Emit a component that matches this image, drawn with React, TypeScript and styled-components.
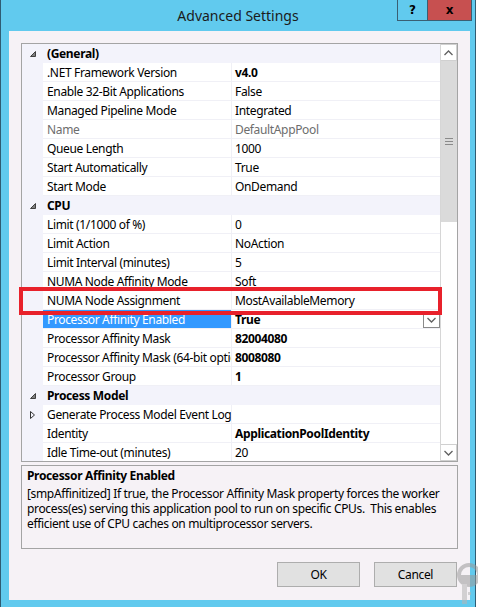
import React from 'react';
import styled, { createGlobalStyle } from 'styled-components';

const Global = createGlobalStyle`
  html, body { margin: 0; padding: 0; background: #ffffff; }
  body { font-family: "Noto Sans", "Segoe UI", sans-serif; font-size: 12px; letter-spacing: -0.35px; color: #000; }
  #root { width: 478px; height: 607px; overflow: hidden; }
`;

const Window = styled.div`
  position: relative;
  width: 476px;
  height: 607px;
  box-sizing: border-box;
  background: #61caee;
  border-left: 1px solid #2f5c73;
  border-right: 1px solid #2f5c73;
  display: flex;
  flex-direction: column;
`;

const TitleBar = styled.div`
  height: 31px;
  display: grid;
  grid-template-columns: 1fr auto 1fr;
  align-items: start;
`;

const Title = styled.div`
  grid-column: 2;
  font-size: 14px;
  letter-spacing: 0;
  line-height: 31px;
  color: #1b1b1b;
  white-space: nowrap;
`;

const Captions = styled.div`
  grid-column: 3;
  justify-self: end;
  display: flex;
  margin-right: 3px;
`;

const CaptionButton = styled.div<{ $close?: boolean }>`
  height: 21px;
  box-sizing: border-box;
  width: ${p => (p.$close ? '45px' : '30px')};
  background: ${p => (p.$close ? '#c75050' : 'transparent')};
  border: 1px solid #3a5f73;
  border-top: none;
  border-right: ${p => (p.$close ? '1px solid #3a5f73' : 'none')};
  display: flex;
  align-items: center;
  justify-content: center;
  font-family: "DejaVu Sans", sans-serif;
  font-weight: bold;
  font-size: 12px;
  letter-spacing: 0;
  color: #000;
`;

const Client = styled.div`
  flex: 1;
  margin: 0 5px 7px 8px;
  background: #f6f2f6;
  padding: 12px 12px 0 12px;
  display: flex;
  flex-direction: column;
`;

const Grid = styled.div`
  position: relative;
  height: 419px;
  box-sizing: border-box;
  border: 1px solid #a4a4a4;
  display: flex;
  background: #fff;
`;

const Rows = styled.div`
  flex: 1;
  overflow: hidden;
`;

const Row = styled.div<{ $cat?: boolean }>`
  display: grid;
  grid-template-columns: 21px 189px 1fr;
  height: 19px;
  background: ${p => (p.$cat ? '#f3f3fb' : '#ffffff')};
`;

const Gutter = styled.div`
  background: #f3f3fb;
  display: flex;
  align-items: center;
  justify-content: center;
`;

const CatLabel = styled.div`
  grid-column: 2 / 4;
  padding-left: 4px;
  line-height: 20px;
  font-weight: bold;
  white-space: nowrap;
`;

const NameCell = styled.div<{ $sel?: boolean; $dim?: boolean }>`
  box-sizing: border-box;
  border-right: 1px solid #f0f0f6;
  box-shadow: inset 0 -1px 0 #f0f0f6;
  padding-left: 4px;
  line-height: 20px;
  white-space: nowrap;
  overflow: hidden;
  background: ${p => (p.$sel ? '#3399ff' : 'transparent')};
  color: ${p => (p.$sel ? '#ffffff' : p.$dim ? '#6d6d6d' : '#000')};
`;

const ValueCell = styled.div<{ $bold?: boolean; $dim?: boolean }>`
  box-sizing: border-box;
  box-shadow: inset 0 -1px 0 #f0f0f6;
  padding-left: 3px;
  line-height: 20px;
  white-space: nowrap;
  overflow: hidden;
  font-weight: ${p => (p.$bold ? 'bold' : 'normal')};
  color: ${p => (p.$dim ? '#6d6d6d' : '#000')};
  display: flex;
  justify-content: space-between;
  align-items: flex-start;
`;

const DropButton = styled.div`
  width: 17px;
  height: 17px;
  box-sizing: border-box;
  border: 1px solid #8a8a8a;
  background: #fff;
  margin-top: 1px;
  display: flex;
  align-items: center;
  justify-content: center;
`;

const Scrollbar = styled.div`
  width: 17px;
  box-sizing: border-box;
  border-left: 1px solid #d6d6d6;
  display: flex;
  flex-direction: column;
  background: #ffffff;
`;

const ScrollArrow = styled.div`
  height: 17px;
  box-sizing: border-box;
  border: 1px solid #d0d0d0;
  border-left: none;
  background: #fff;
  display: flex;
  align-items: center;
  justify-content: center;
`;

const Thumb = styled.div`
  height: 161px;
  background: #dadada;
  display: flex;
  align-items: center;
  justify-content: center;
`;

const Track = styled.div`
  flex: 1;
`;

const Highlight = styled.div`
  position: absolute;
  left: -3px;
  top: 243px;
  width: 423px;
  height: 28px;
  box-sizing: border-box;
  border: 4px solid #e8212b;
  pointer-events: none;
`;

const Description = styled.div`
  margin-top: 3px;
  height: 84px;
  box-sizing: border-box;
  border: 1px solid #a4a4a4;
  padding: 2px 5px 0 5px;
`;

const DescTitle = styled.div`
  font-weight: bold;
  line-height: 16px;
  margin-bottom: 2px;
`;

const DescLine = styled.div`
  line-height: 15px;
  white-space: nowrap;
`;

const ButtonRow = styled.div`
  margin-top: 13px;
  display: flex;
  justify-content: flex-end;
  gap: 14px;
  padding-right: 1px;
`;

const DialogButton = styled.div`
  width: 83px;
  height: 25px;
  box-sizing: border-box;
  background: #e1e1e1;
  border: 1px solid #adadad;
  display: flex;
  align-items: center;
  justify-content: center;
`;

const Watermark = styled.svg`
  position: absolute;
  left: 448px;
  top: 562px;
  opacity: 0.55;
  pointer-events: none;
`;

const Expanded = () => (
  <svg width="8" height="8" viewBox="0 0 8 8">
    <polygon points="6.5,1.5 6.5,6.5 1.5,6.5" fill="#808080" stroke="#404040" strokeWidth="1" />
  </svg>
);

const Collapsed = () => (
  <svg width="8" height="10" viewBox="0 0 8 10">
    <polygon points="1.5,1.5 5.5,5 1.5,8.5" fill="none" stroke="#333" strokeWidth="1" />
  </svg>
);

const Chevron = ({ up }: { up?: boolean }) => (
  <svg width="9" height="6" viewBox="0 0 9 6">
    <polyline
      points={up ? '0.5,5 4.5,1 8.5,5' : '0.5,1 4.5,5 8.5,1'}
      fill="none"
      stroke="#606060"
      strokeWidth="1.3"
    />
  </svg>
);

const Grip = () => (
  <svg width="8" height="7" viewBox="0 0 8 7">
    <rect x="0" y="0" width="8" height="1" fill="#8a8a8a" />
    <rect x="0" y="3" width="8" height="1" fill="#8a8a8a" />
    <rect x="0" y="6" width="8" height="1" fill="#8a8a8a" />
  </svg>
);

type Item =
  | { cat: string }
  | { name: string; value: string; bold?: boolean; dim?: boolean; sel?: boolean; collapsed?: boolean };

const items: Item[] = [
  { cat: '(General)' },
  { name: '.NET Framework Version', value: 'v4.0', bold: true },
  { name: 'Enable 32-Bit Applications', value: 'False' },
  { name: 'Managed Pipeline Mode', value: 'Integrated' },
  { name: 'Name', value: 'DefaultAppPool', dim: true },
  { name: 'Queue Length', value: '1000' },
  { name: 'Start Automatically', value: 'True' },
  { name: 'Start Mode', value: 'OnDemand' },
  { cat: 'CPU' },
  { name: 'Limit (1/1000 of %)', value: '0' },
  { name: 'Limit Action', value: 'NoAction' },
  { name: 'Limit Interval (minutes)', value: '5' },
  { name: 'NUMA Node Affinity Mode', value: 'Soft' },
  { name: 'NUMA Node Assignment', value: 'MostAvailableMemory' },
  { name: 'Processor Affinity Enabled', value: 'True', bold: true, sel: true },
  { name: 'Processor Affinity Mask', value: '82004080', bold: true },
  { name: 'Processor Affinity Mask (64-bit option)', value: '8008080', bold: true },
  { name: 'Processor Group', value: '1', bold: true },
  { cat: 'Process Model' },
  { name: 'Generate Process Model Event Log', value: '', collapsed: true },
  { name: 'Identity', value: 'ApplicationPoolIdentity', bold: true },
  { name: 'Idle Time-out (minutes)', value: '20' },
];

export default function App() {
  return (
    <>
      <Global />
      <Window>
        <TitleBar>
          <Title>Advanced Settings</Title>
          <Captions>
            <CaptionButton>?</CaptionButton>
            <CaptionButton $close>x</CaptionButton>
          </Captions>
        </TitleBar>
        <Client>
          <Grid>
            <Rows>
              {items.map((it, i) =>
                'cat' in it ? (
                  <Row key={i} $cat>
                    <Gutter>
                      <Expanded />
                    </Gutter>
                    <CatLabel>{it.cat}</CatLabel>
                  </Row>
                ) : (
                  <Row key={i}>
                    <Gutter>{it.collapsed ? <Collapsed /> : null}</Gutter>
                    <NameCell $sel={it.sel} $dim={it.dim}>
                      {it.name}
                    </NameCell>
                    <ValueCell $bold={it.bold} $dim={it.dim}>
                      <span>{it.value}</span>
                      {it.sel ? (
                        <DropButton>
                          <Chevron />
                        </DropButton>
                      ) : null}
                    </ValueCell>
                  </Row>
                )
              )}
            </Rows>
            <Scrollbar>
              <ScrollArrow>
                <Chevron up />
              </ScrollArrow>
              <Thumb>
                <Grip />
              </Thumb>
              <Track />
              <ScrollArrow>
                <Chevron />
              </ScrollArrow>
            </Scrollbar>
            <Highlight />
          </Grid>
          <Description>
            <DescTitle>Processor Affinity Enabled</DescTitle>
            <DescLine>[smpAffinitized] If true, the Processor Affinity Mask property forces the worker</DescLine>
            <DescLine>process(es) serving this application pool to run on specific CPUs.&nbsp; This enables</DescLine>
            <DescLine>efficient use of CPU caches on multiprocessor servers.</DescLine>
          </Description>
          <ButtonRow>
            <DialogButton>OK</DialogButton>
            <DialogButton>Cancel</DialogButton>
          </ButtonRow>
        </Client>
        <Watermark width="30" height="45" viewBox="0 0 30 45">
          <circle cx="20" cy="13" r="10" fill="none" stroke="#9a9a9a" strokeWidth="4" />
          <path d="M10 13 A10 10 0 0 0 30 13 Z" fill="#9a9a9a" />
          <rect x="13" y="22" width="5" height="20" fill="#b5b5b5" />
          <rect x="19" y="30" width="3" height="3" fill="#b5b5b5" />
        </Watermark>
      </Window>
    </>
  );
}
